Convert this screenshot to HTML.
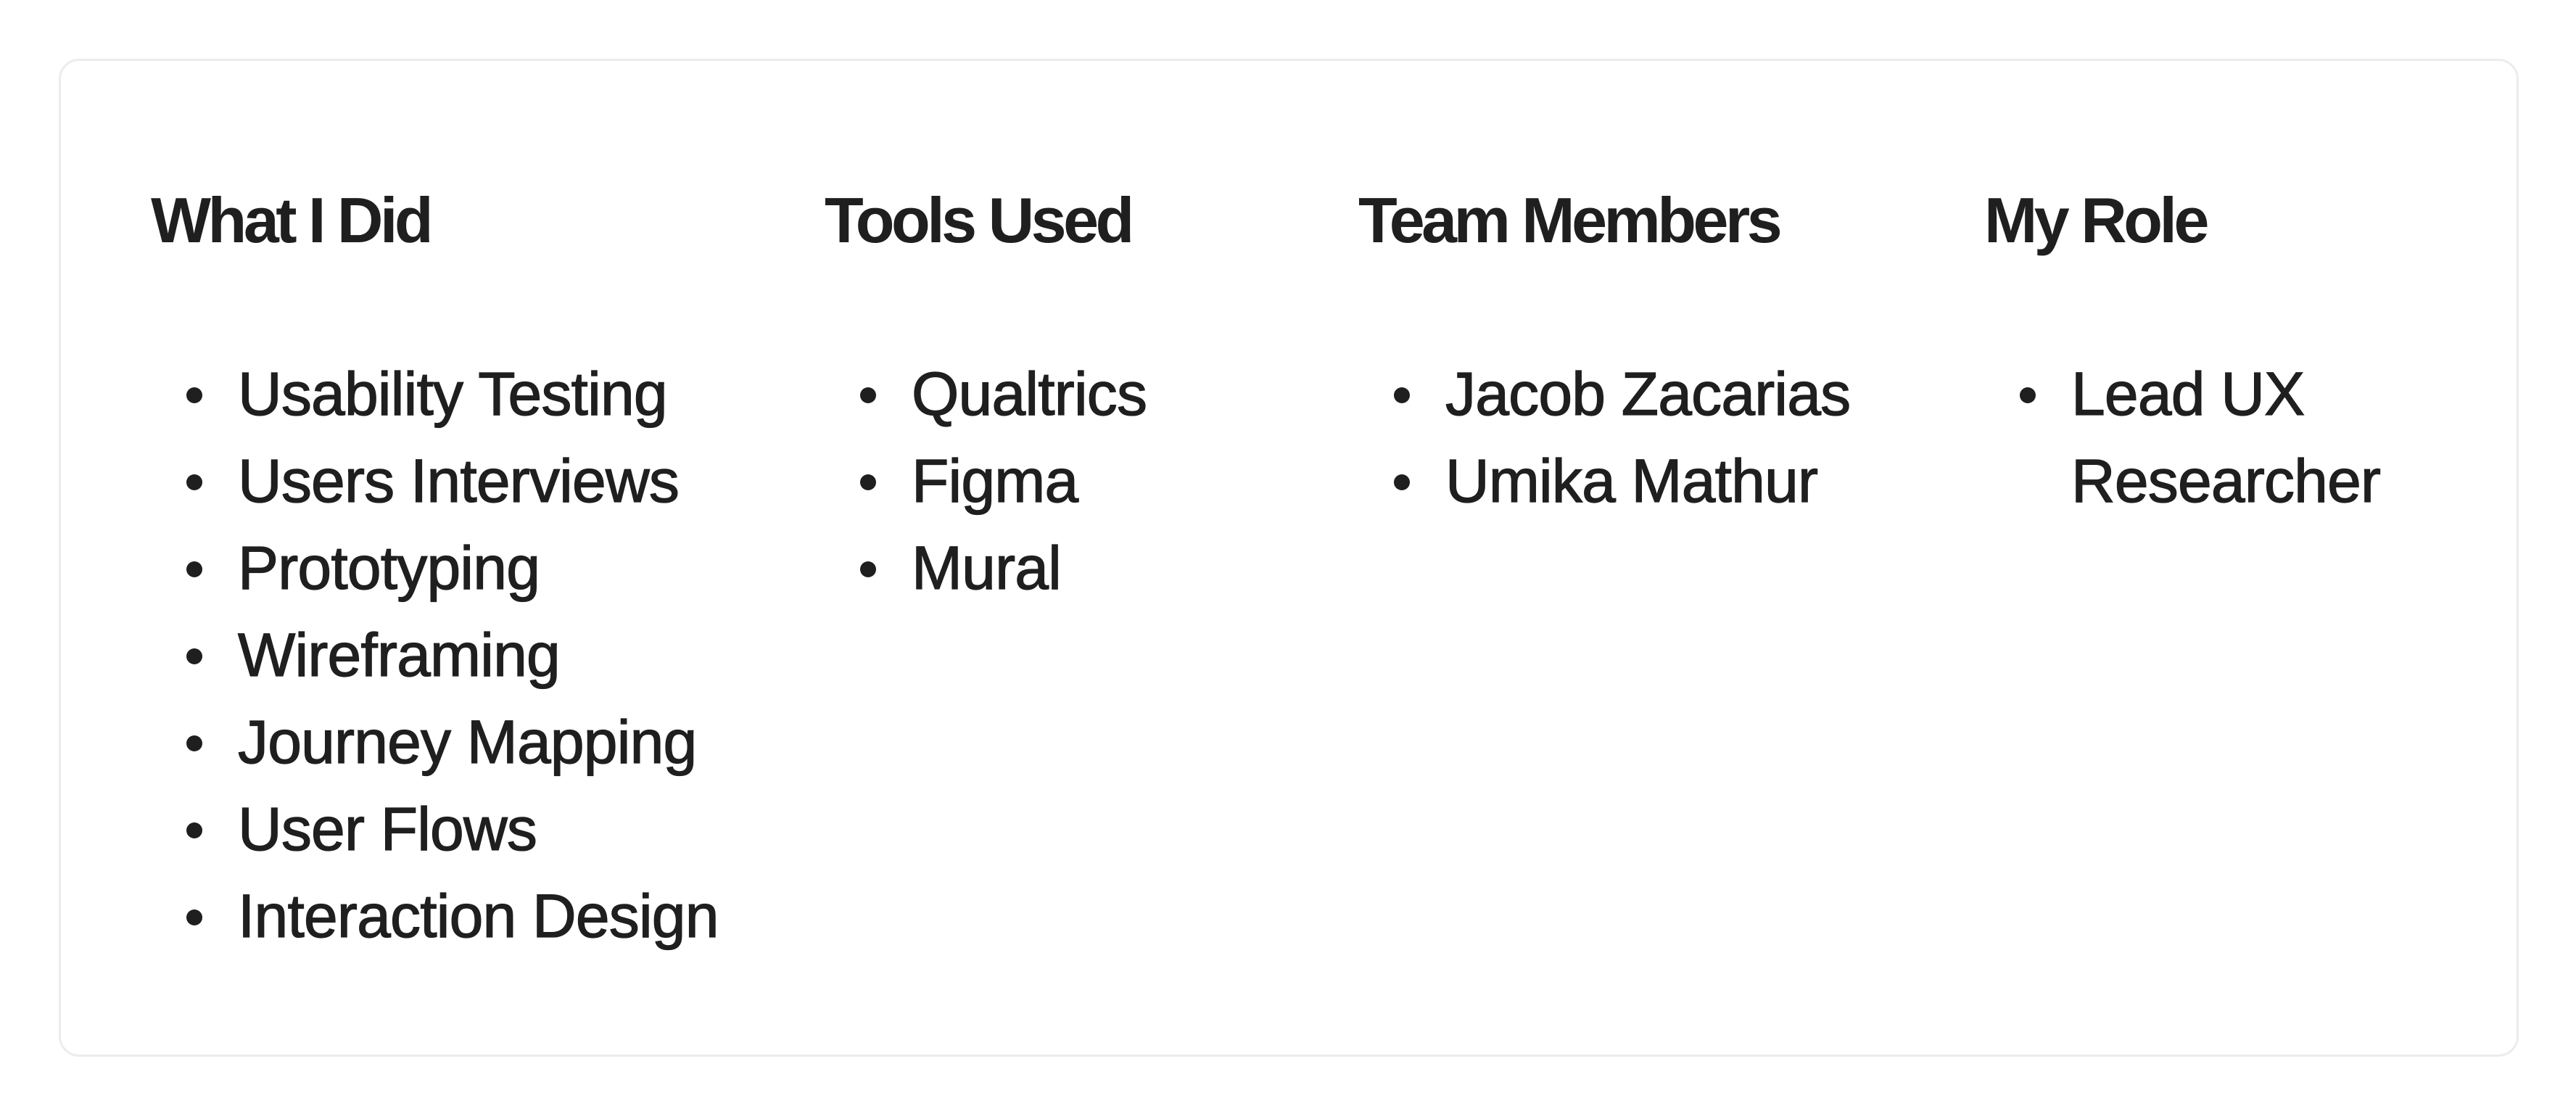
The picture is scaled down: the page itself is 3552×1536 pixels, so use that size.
<!DOCTYPE html>
<html><head><meta charset="utf-8"><style>
html,body{margin:0;padding:0;background:#fff;}
body{width:3552px;height:1536px;position:relative;overflow:hidden;font-family:"Liberation Sans",Arial,sans-serif;color:#1f1f1f;}
.card{position:absolute;left:81px;top:81px;width:3392px;height:1376px;border:3px solid #ececec;border-radius:28px;box-sizing:border-box;}
.col{position:absolute;top:0;}
h2{position:absolute;top:254px;margin:0;font-size:88px;line-height:100px;font-weight:700;letter-spacing:-4.5px;white-space:nowrap;}
ul{position:absolute;top:483px;margin:0;padding:0;list-style:none;}
li{position:relative;font-size:84px;line-height:120px;white-space:nowrap;padding-left:120px;letter-spacing:-0.8px;-webkit-text-stroke:1.3px #1f1f1f;}
li::before{content:"";position:absolute;left:49px;top:51px;width:22px;height:22px;border-radius:50%;background:#1f1f1f;}
</style></head><body>
<div class="card"></div>
<div class="col" style="left:208px">
<h2>What I Did</h2>
<ul><li>Usability Testing</li><li>Users Interviews</li><li>Prototyping</li><li>Wireframing</li><li>Journey Mapping</li><li>User Flows</li><li>Interaction Design</li></ul>
</div>
<div class="col" style="left:1137px">
<h2>Tools Used</h2>
<ul><li>Qualtrics</li><li>Figma</li><li>Mural</li></ul>
</div>
<div class="col" style="left:1873px">
<h2>Team Members</h2>
<ul><li>Jacob Zacarias</li><li>Umika Mathur</li></ul>
</div>
<div class="col" style="left:2736px">
<h2>My Role</h2>
<ul><li>Lead UX<br>Researcher</li></ul>
</div>
</body></html>
